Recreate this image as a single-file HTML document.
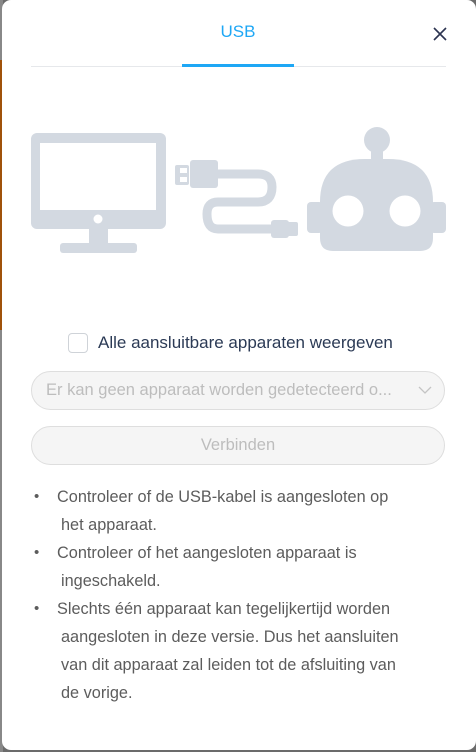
<!DOCTYPE html>
<html><head><meta charset="utf-8">
<style>
html,body{margin:0;padding:0;width:476px;height:752px;overflow:hidden;background:#6b6b6b;font-family:"Liberation Sans",sans-serif;}
.strip{position:absolute;left:0;top:0;width:3px;height:752px;background:linear-gradient(#888 0,#888 60px,#a0520a 60px,#a0520a 330px,#888 330px);}
.panel{position:absolute;left:2px;top:0;width:474px;height:750px;background:#fff;border-radius:9px;}
.tab{position:absolute;left:182px;width:112px;top:22px;text-align:center;color:#1ea7f5;font-size:17px;}
.bar{position:absolute;left:182px;top:64px;width:112px;height:3px;background:#1ea7f5;}
.line{position:absolute;left:31px;top:66px;width:415px;height:1px;background:#e6e8eb;}
.x{position:absolute;left:430px;top:24px;}
.chk{position:absolute;left:68px;top:333px;width:18px;height:18px;border:1px solid #cfd3d8;border-radius:4px;}
.lbl{position:absolute;left:98px;top:333px;font-size:17px;color:#2b3a55;white-space:nowrap;}
.field{position:absolute;left:31px;width:412px;height:37px;border:1px solid #dedede;border-radius:20px;background:#f5f5f5;color:#bdbdbd;font-size:16.5px;line-height:37px;}
.list{position:absolute;left:0;top:483px;font-size:16.3px;color:#5c5c5c;line-height:28px;white-space:nowrap;}
.list div{position:relative;padding-left:57px;}
.list div.c{padding-left:61px;}
.list span{position:absolute;left:34px;font-size:15px;}
</style></head><body>
<div class="strip"></div>
<div class="panel"></div>
<div class="tab">USB</div>
<div class="line"></div>
<div class="bar"></div>
<svg class="x" width="20" height="20" viewBox="0 0 20 20"><path d="M4 4L16 16M16 4L4 16" stroke="#2b3450" stroke-width="1.6"/></svg>
<svg style="position:absolute;left:0;top:0" width="476" height="270">
<g fill="#d3d9e1">
<rect x="31" y="133" width="135" height="96" rx="6"/>
<rect x="89" y="226" width="19" height="19"/>
<rect x="60" y="243" width="77" height="10" rx="3"/>
<rect x="175" y="165" width="14" height="20" rx="2"/>
<rect x="190" y="160" width="28" height="28" rx="3"/>
<rect x="271" y="220" width="18" height="18" rx="3"/>
<rect x="287" y="222" width="11" height="14" rx="2"/>
<circle cx="377" cy="140" r="13"/>
<rect x="371" y="148" width="12" height="14"/>
<path d="M320 202 Q320 159 365 159 L388 159 Q433 159 433 202 L433 238 Q433 251 420 251 L333 251 Q320 251 320 238Z"/>
<rect x="307" y="202" width="16" height="31" rx="4"/>
<rect x="430" y="202" width="16" height="31" rx="4"/>
</g>
<rect x="40" y="143" width="116" height="67" fill="#fff"/>
<circle cx="98" cy="219" r="4.5" fill="#fff"/>
<rect x="180" y="168" width="7" height="5" fill="#fff"/>
<rect x="180" y="177" width="7" height="5" fill="#fff"/>
<path d="M217 174 L258 174 Q272 174 272 187 Q272 202 258 202 L218 202 Q207 202 207 214 Q207 229 218 229 L272 229" fill="none" stroke="#d3d9e1" stroke-width="9"/>
<circle cx="348" cy="211" r="15.5" fill="#fff"/>
<circle cx="405" cy="211" r="15.5" fill="#fff"/>
</svg>
<div class="chk"></div>
<div class="lbl">Alle aansluitbare apparaten weergeven</div>
<div class="field" style="top:371px;padding-left:0"><span style="position:absolute;left:14px;">Er kan geen apparaat worden gedetecteerd o...</span>
<svg style="position:absolute;left:386px;top:13px" width="14" height="10" viewBox="0 0 14 10"><path d="M1 2L7 8L13 2" fill="none" stroke="#c4c4c4" stroke-width="1.3"/></svg></div>
<div class="field" style="top:426px;text-align:center">Verbinden</div>
<div class="list">
<div><span>•</span>Controleer of de USB-kabel is aangesloten op</div>
<div class="c">het apparaat.</div>
<div><span>•</span>Controleer of het aangesloten apparaat is</div>
<div class="c">ingeschakeld.</div>
<div><span>•</span>Slechts één apparaat kan tegelijkertijd worden</div>
<div class="c">aangesloten in deze versie. Dus het aansluiten</div>
<div class="c">van dit apparaat zal leiden tot de afsluiting van</div>
<div class="c">de vorige.</div>
</div>
</body></html>
